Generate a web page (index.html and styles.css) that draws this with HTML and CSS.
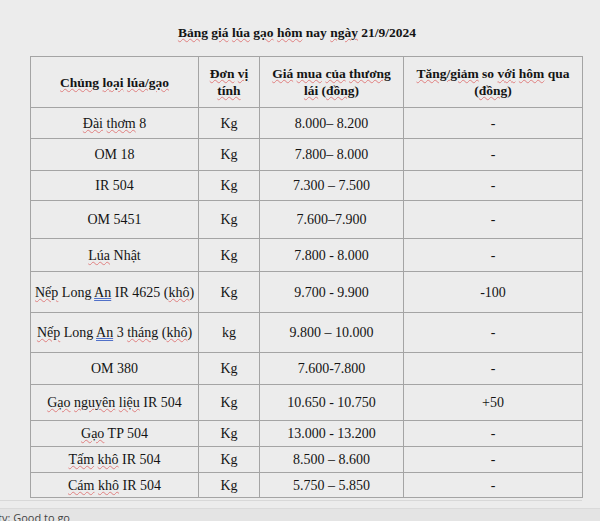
FILE: index.html
```html
<!DOCTYPE html>
<html lang="vi">
<head>
<meta charset="utf-8">
<title>Bảng giá lúa gạo</title>
<link rel="stylesheet" href="styles.css">
</head>
<body>
<div class="doc">
  <h1 class="title"><span class="sp">Bảng</span> <span class="sp">giá</span> <span class="sp">lúa</span> <span class="sp">gạo</span> <span class="sp">hôm</span> nay <span class="sp">ngày</span> 21/9/2024</h1>
  <table class="price">
    <colgroup>
      <col class="c1"><col class="c2"><col class="c3"><col class="c4">
    </colgroup>
    <thead>
      <tr class="r0">
        <th><span class="sp">Chủng</span> <span class="sp">loại</span> <span class="sp">lúa/gạo</span></th>
        <th><span class="sp">Đơn</span> <span class="sp">vị</span><br><span class="sp">tính</span></th>
        <th><span class="sp">Giá</span> <span class="sp">mua</span> <span class="sp">của</span> <span class="sp">thương</span><br><span class="sp">lái</span> (<span class="sp">đồng</span>)</th>
        <th><span class="sp">Tăng/giảm</span> so <span class="sp">với</span> <span class="sp">hôm</span> qua<br>(<span class="sp">đồng</span>)</th>
      </tr>
    </thead>
    <tbody>
      <tr class="r1"><td><span class="sp">Đài</span> <span class="sp">thơm</span> 8</td><td>Kg</td><td>8.000– 8.200</td><td>-</td></tr>
      <tr class="r2"><td>OM 18</td><td>Kg</td><td>7.800– 8.000</td><td>-</td></tr>
      <tr class="r3"><td>IR 504</td><td>Kg</td><td>7.300 – 7.500</td><td>-</td></tr>
      <tr class="r4"><td>OM 5451</td><td>Kg</td><td>7.600–7.900</td><td>-</td></tr>
      <tr class="r5"><td><span class="sp">Lúa</span> Nhật</td><td>Kg</td><td>7.800 - 8.000</td><td>-</td></tr>
      <tr class="r6"><td><span class="sp">Nếp</span> Long <span class="gr">An</span> IR 4625 (<span class="sp">khô</span>)</td><td>Kg</td><td>9.700 - 9.900</td><td>-100</td></tr>
      <tr class="r7"><td><span class="sp">Nếp</span> Long <span class="gr">An</span> 3 <span class="sp">tháng</span> (<span class="sp">khô</span>)</td><td>kg</td><td>9.800 – 10.000</td><td>-</td></tr>
      <tr class="r8"><td>OM 380</td><td>Kg</td><td>7.600-7.800</td><td>-</td></tr>
      <tr class="r9"><td><span class="sp">Gạo</span> <span class="sp">nguyên</span> <span class="sp">liệu</span> IR 504</td><td>Kg</td><td>10.650 - 10.750</td><td>+50</td></tr>
      <tr class="r10"><td><span class="sp">Gạo</span> TP 504</td><td>Kg</td><td>13.000 - 13.200</td><td>-</td></tr>
      <tr class="r11"><td><span class="sp">Tấm</span> <span class="sp">khô</span> IR 504</td><td>Kg</td><td>8.500 – 8.600</td><td>-</td></tr>
      <tr class="r12"><td><span class="sp">Cám</span> <span class="sp">khô</span> IR 504</td><td>Kg</td><td>5.750 – 5.850</td><td>-</td></tr>
    </tbody>
  </table>
  <div class="pageedge"></div>
</div>
<div class="status">ty: Good to go</div>
</body>
</html>
```

FILE: styles.css
```css
html, body {
  margin: 0;
  padding: 0;
  background: #ececec;
}
body {
  width: 600px;
  height: 521px;
  overflow: hidden;
  font-family: "Liberation Serif", "Times New Roman", serif;
  color: #141414;
}
.doc {
  height: 508px;
  padding-top: 24px;
  box-sizing: border-box;
}
.title {
  margin: 0 0 14px 0;
  padding-right: 6px;
  font-size: 13.5px;
  line-height: 18px;
  font-weight: bold;
  text-align: center;
}
.sp {
  text-decoration: underline wavy #e08080;
  text-decoration-thickness: 1px;
  text-underline-offset: 1px;
}
.gr {
  text-decoration: underline double #5070c8;
  text-decoration-thickness: 1px;
  text-underline-offset: 1px;
}
.price {
  margin-left: 30px;
  border-collapse: collapse;
  table-layout: fixed;
  width: 552px;
  border: 1px solid #a4a4a4;
}
.c1 { width: 168px; }
.c2 { width: 61px; }
.c3 { width: 144px; }
.c4 { width: 179px; }
.price th, .price td {
  border: 1px solid #a4a4a4;
  text-align: center;
  vertical-align: middle;
  padding: 0 4px;
  white-space: nowrap;
}
.price th {
  font-size: 13.5px;
  line-height: 17px;
  font-weight: bold;
}
.price td {
  font-size: 14px;
  line-height: 17px;
}
.r0 { height: 51px; }
.r1 { height: 31px; }
.r2 { height: 32px; }
.r3 { height: 30px; }
.r4 { height: 38px; }
.r5 { height: 33px; }
.r6 { height: 41px; }
.r7 { height: 40px; }
.r8 { height: 32px; }
.r9 { height: 36px; }
.r10 { height: 26px; }
.r11 { height: 26px; }
.r12 { height: 25px; }
.pageedge {
  margin: 2px 18px 0 0;
  height: 1px;
  background: #d8d8d8;
}
.status {
  height: 13px;
  background: #e4e4e4;
  border-top: 1px solid #dadada;
  font-family: "Open Sans", "Noto Sans", sans-serif;
  font-size: 11px;
  line-height: 18px;
  color: #444;
  margin-left: -2px;
  white-space: nowrap;
}
```
